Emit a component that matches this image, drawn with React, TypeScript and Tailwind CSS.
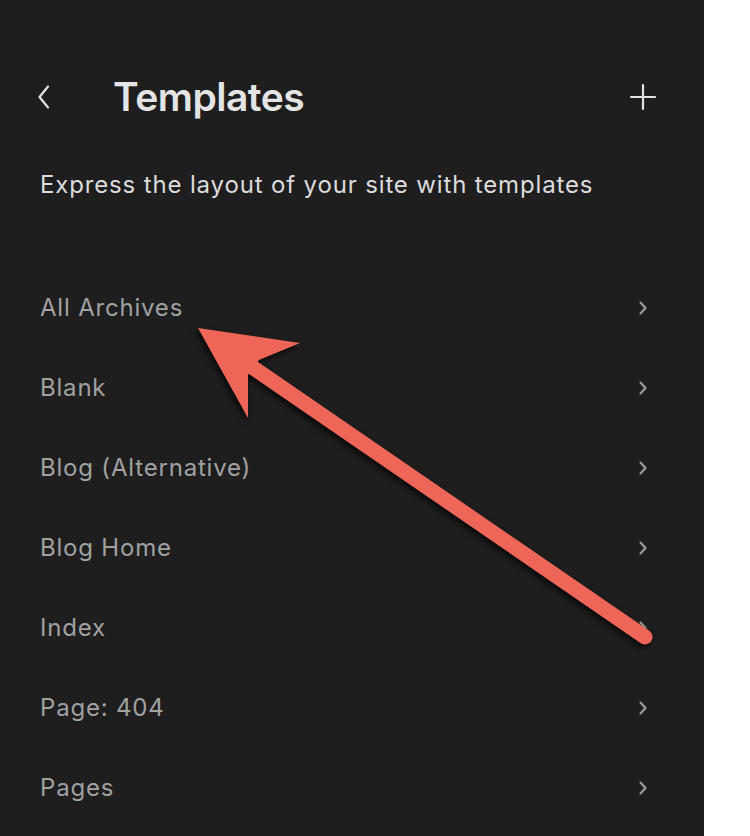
import React from "react";

const items = [
  "All Archives",
  "Blank",
  "Blog (Alternative)",
  "Blog Home",
  "Index",
  "Page: 404",
  "Pages",
];

const ChevronRight = () => (
  <svg width="10" height="16" viewBox="0 0 10 16" fill="none">
    <path d="M2.5 2.5 L7.5 8 L2.5 13.5" stroke="#9b9b9b" strokeWidth="2.2" strokeLinecap="round" strokeLinejoin="round" />
  </svg>
);

export default function App() {
  return (
    <div className="relative flex h-[836px] w-[750px] overflow-hidden bg-white" style={{ fontFamily: "Inter, 'Noto Sans', sans-serif" }}>
      <div className="flex h-full w-[704px] flex-col bg-[#1e1e1e] pl-[40px] pr-[47px]">
        {/* header */}
        <div className="mt-[65px] flex h-[64px] items-center">
          <button className="-ml-[8px] flex h-[30px] w-[24px] items-center justify-center">
            <svg width="18" height="26" viewBox="0 0 18 26" fill="none">
              <path d="M13 2.5 L4.5 13 L13 23.5" stroke="#e2e2e2" strokeWidth="2.2" strokeLinecap="round" strokeLinejoin="round" />
            </svg>
          </button>
          <h1 className="ml-[57px] text-[39px] font-semibold tracking-[-0.5px] text-[#e4e4e4]">Templates</h1>
          <button className="ml-auto flex h-[28px] w-[28px] items-center justify-center">
            <svg width="28" height="28" viewBox="0 0 28 28" fill="none">
              <path d="M14 2 V26 M2 14 H26" stroke="#e2e2e2" strokeWidth="2.2" strokeLinecap="round" />
            </svg>
          </button>
        </div>

        <p className="mt-[41px] h-[30px] text-[24px] leading-[30px] tracking-[0.85px] text-[#dcdcdc]">
          Express the layout of your site with templates
        </p>

        <ul className="mt-[68px] flex flex-col">
          {items.map((item) => (
            <li key={item} className="flex h-[80px] items-center justify-between">
              <span className="text-[24px] tracking-[0.8px] text-[#a1a1a1]">{item}</span>
              <span className="mr-[9px]">
                <ChevronRight />
              </span>
            </li>
          ))}
        </ul>
      </div>

      {/* annotation arrow */}
      <svg
        className="pointer-events-none absolute left-0 top-0"
        width="750"
        height="836"
        viewBox="0 0 750 836"
        style={{ filter: "drop-shadow(-2px 3px 3px rgba(0,0,0,0.75))" }}
      >
        <line x1="252" y1="367" x2="645" y2="637" stroke="#ee6657" strokeWidth="15" strokeLinecap="round" />
        <polygon points="198,328 300,343 259,360 248,375 248,418" fill="#ee6657" />
      </svg>
    </div>
  );
}
